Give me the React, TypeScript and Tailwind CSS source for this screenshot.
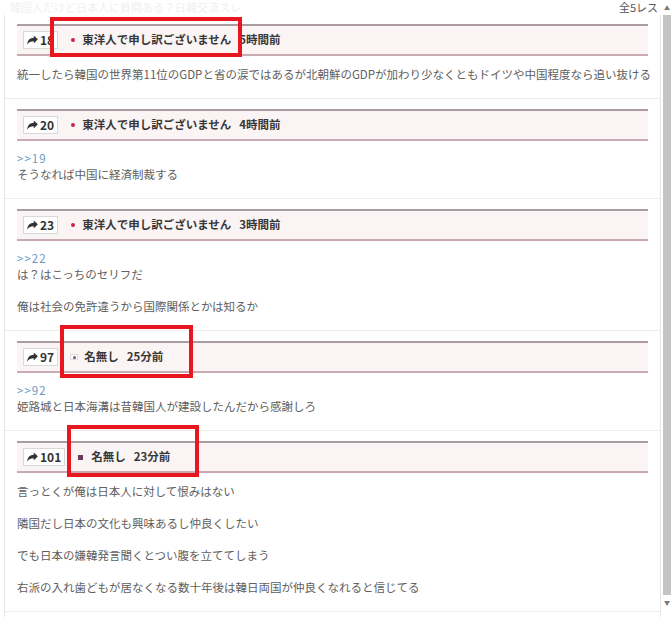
const JP = { fontFamily: '"Noto Sans CJK JP", "Noto Sans", sans-serif' }

type Post = {
  no: number
  mark: 'dot' | 'kr' | 'sq'
  name: string
  time: string
  anchor?: string
  lines: string[]
}

const posts: Post[] = [
  {
    no: 18,
    mark: 'dot',
    name: '東洋人で申し訳ございません',
    time: '5時間前',
    lines: ['統一したら韓国の世界第11位のGDPと省の涙ではあるが北朝鮮のGDPが加わり少なくともドイツや中国程度なら追い抜ける'],
  },
  {
    no: 20,
    mark: 'dot',
    name: '東洋人で申し訳ございません',
    time: '4時間前',
    anchor: '>>19',
    lines: ['そうなれば中国に経済制裁する'],
  },
  {
    no: 23,
    mark: 'dot',
    name: '東洋人で申し訳ございません',
    time: '3時間前',
    anchor: '>>22',
    lines: ['は？はこっちのセリフだ', '', '俺は社会の免許違うから国際関係とかは知るか'],
  },
  {
    no: 97,
    mark: 'kr',
    name: '名無し',
    time: '25分前',
    anchor: '>>92',
    lines: ['姫路城と日本海溝は昔韓国人が建設したんだから感謝しろ'],
  },
  {
    no: 101,
    mark: 'sq',
    name: '名無し',
    time: '23分前',
    lines: [
      '言っとくが俺は日本人に対して恨みはない',
      '',
      '隣国だし日本の文化も興味あるし仲良くしたい',
      '',
      'でも日本の嫌韓発言聞くとつい腹を立ててしまう',
      '',
      '右派の入れ歯どもが居なくなる数十年後は韓日両国が仲良くなれると信じてる',
    ],
  },
]

function ShareIcon() {
  return (
    <svg width="11" height="10" viewBox="0 0 512 460" className="text-[#333]">
      <path fill="currentColor" d="M505 200 L315 20 V120 C140 130 20 230 10 440 C80 320 180 290 315 290 V390 Z" />
    </svg>
  )
}

function Mark({ kind }: { kind: Post['mark'] }) {
  if (kind === 'dot') return <span className="ml-[13px] mr-[7px] h-[4px] w-[4px] rounded-full bg-[#cc2244]" />
  if (kind === 'kr')
    return (
      <span className="ml-[12px] mr-[6px] flex h-[6px] w-[8px] items-center justify-center border border-[#ddd] bg-white">
        <span className="h-[3px] w-[3px] rounded-full bg-gradient-to-b from-[#d03050] to-[#3050a0]" />
      </span>
    )
  return <span className="ml-[13px] mr-[8px] h-[5px] w-[5px] bg-[#6b3a5c]" />
}

function PostItem({ post, first }: { post: Post; first: boolean }) {
  return (
    <div className={`border-b border-[#ececec] px-[12px] pb-[16px] ${first ? 'pt-[9px]' : 'pt-[10px]'}`}>
      <div className="flex h-[32px] items-center border-t-2 border-b-2 border-t-[#ad9ca2] border-b-[#c9a9b2] bg-[#fbf4f5] pl-[6px]">
        <span className="flex h-[18px] items-center gap-[2px] border border-[#d9d9d9] bg-white px-[3px] text-[12px] font-bold text-[#333]">
          <ShareIcon />
          {post.no}
        </span>
        <Mark kind={post.mark} />
        <span className="text-[11.5px] font-bold text-[#383838]">{post.name}</span>
        <span className="ml-[8px] text-[11.5px] font-bold text-[#383838]">{post.time}</span>
      </div>
      <div className={`${post.anchor ? 'mt-[9px]' : 'mt-[10px]'} text-[11.5px] leading-[16px] text-[#606060]`}>
        {post.anchor && <p className="tracking-[1px] text-[#6c9bc6]">{post.anchor}</p>}
        {post.lines.map((l, i) => (
          <p key={i} className="h-[16px] whitespace-nowrap">
            {l}
          </p>
        ))}
      </div>
    </div>
  )
}

export default function App() {
  return (
    <div className="relative flex h-[617px] w-[672px] overflow-hidden bg-white" style={JP}>
      <div className="w-[662px]">
        <div className="flex h-[15px] items-center justify-between pl-[10px] pr-[4px]">
          <span className="text-[11px] text-[#f0f0f0]">韓国人だけど日本人に質問ある？日韓交流スレ</span>
          <span className="text-[11px] text-[#555]">全5レス</span>
        </div>
        <div className="ml-[4px] w-[657px] border-l border-r border-[#e6e6e6]">
          {posts.map((p, i) => (
            <PostItem key={p.no} post={p} first={i === 0} />
          ))}
          <div className="h-[14px]" />
        </div>
      </div>
      <div className="flex w-[10px] flex-col">
        <div className="flex h-[15px] items-center justify-center text-[6px] text-[#777]">▲</div>
        <div className="mx-[1px] h-[580px] bg-[#c4c4c4]" />
        <div className="flex h-[14px] items-center justify-center text-[6px] text-[#777]">▼</div>
      </div>

      <div className="absolute left-[50px] top-[17px] h-[40px] w-[192px] border-[4px] border-[#e8161e]" />
      <div className="absolute left-[60px] top-[325px] h-[53px] w-[133px] border-[4px] border-[#e8161e]" />
      <div className="absolute left-[67px] top-[425px] h-[52px] w-[132px] border-[4px] border-[#e8161e]" />
    </div>
  )
}
